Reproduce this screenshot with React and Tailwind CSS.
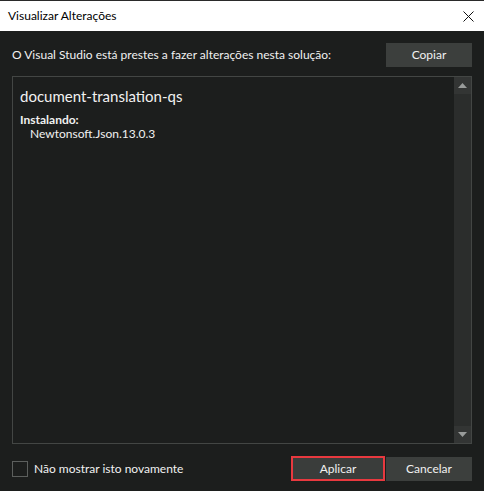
export default function App() {
  const font = { fontFamily: 'Lato, "Noto Sans", sans-serif' };
  return (
    <div className="w-[484px] h-[491px] flex flex-col bg-[#1c1e1d] border-t border-[#2a2a2a] text-[12px]" style={font}>
      <div className="h-[30px] bg-white flex items-center justify-between pl-[8px] pr-[10px] shrink-0">
        <span className="text-[12px] text-black">Visualizar Alterações</span>
        <svg width="11" height="11" viewBox="0 0 11 11">
          <path d="M0.5 0.5 L10.5 10.5 M10.5 0.5 L0.5 10.5" stroke="#111" strokeWidth="1" />
        </svg>
      </div>
      <div className="flex-1 flex flex-col px-[12px] pt-[12px] pb-[10px]">
        <div className="flex items-center justify-between h-[24px]">
          <span className="text-[#f1f1f1] text-[12px]">O Visual Studio está prestes a fazer alterações nesta solução:</span>
          <button className="w-[86px] h-[24px] bg-[#3c3f3d] text-[#f1f1f1] text-[12px]">Copiar</button>
        </div>
        <div className="mt-[9px] h-[368px] border border-[#434644] flex">
          <div className="flex-1 pl-[7px] pt-[9px] text-[#f1f1f1]">
            <div className="text-[15px] leading-[20px]">document-translation-qs</div>
            <div className="mt-[7px] font-bold text-[12px] leading-[14px]">Instalando:</div>
            <div className="pl-[10px] text-[12px] leading-[14px]">Newtonsoft.Json.13.0.3</div>
          </div>
          <div className="w-[17px] bg-[#2b2d2c] flex flex-col justify-between">
            <div className="h-[17px] bg-[#333534] flex items-center justify-center">
              <svg width="9" height="5" viewBox="0 0 9 5"><path d="M4.5 0 L9 5 L0 5 Z" fill="#999b9a" /></svg>
            </div>
            <div className="h-[17px] bg-[#333534] flex items-center justify-center">
              <svg width="9" height="5" viewBox="0 0 9 5"><path d="M0 0 L9 0 L4.5 5 Z" fill="#999b9a" /></svg>
            </div>
          </div>
        </div>
        <div className="mt-[12px] flex items-center">
          <div className="w-[16px] h-[16px] border border-[#5c5f5d]" />
          <span className="ml-[6px] text-[#f1f1f1] text-[12px]">Não mostrar isto novamente</span>
          <div className="flex-1" />
          <button className="w-[94px] h-[25px] border-2 border-[#e8393f] bg-[#3a3d3b] text-[#f1f1f1] text-[12px]">Aplicar</button>
          <button className="ml-[1px] w-[86px] h-[24px] bg-[#3c3f3d] text-[#f1f1f1] text-[12px]">Cancelar</button>
        </div>
      </div>
    </div>
  );
}
